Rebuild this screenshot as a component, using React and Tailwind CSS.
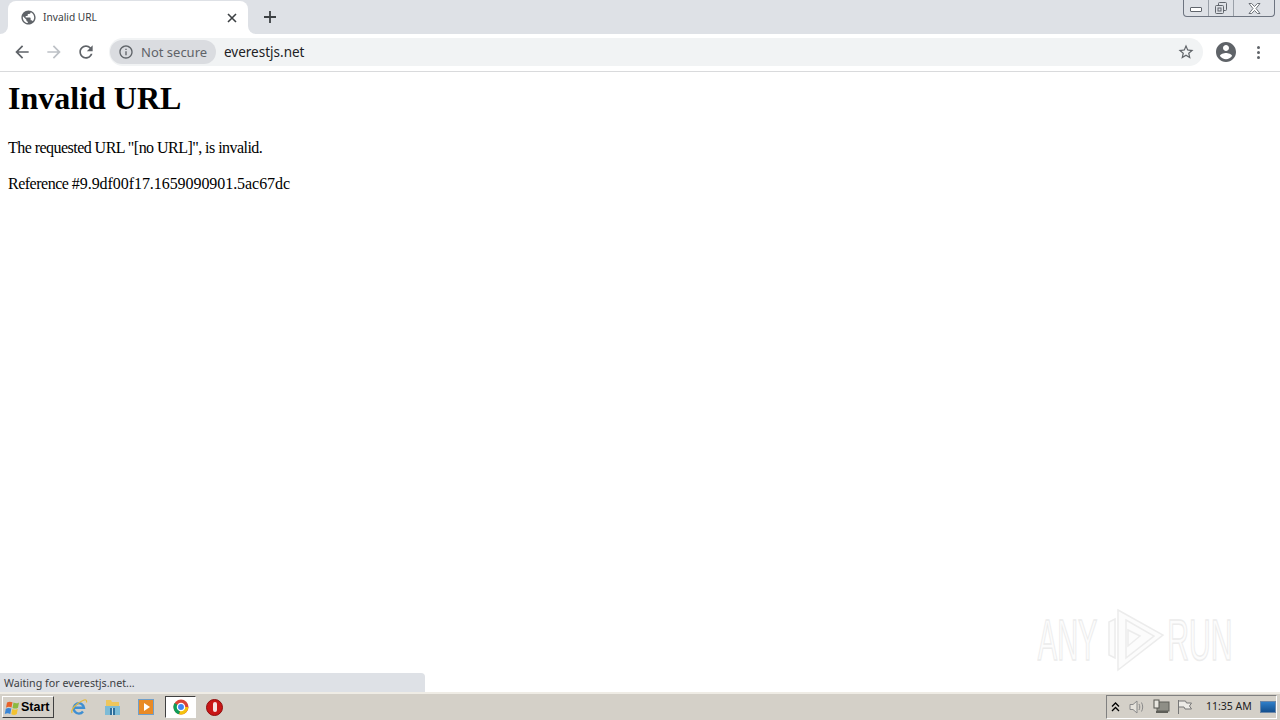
// App.jsx
const UI_FONT = "font-['Noto_Sans',sans-serif]";

const PATHS = {
  globe:
    "M12 2C6.48 2 2 6.48 2 12s4.48 10 10 10 10-4.48 10-10S17.52 2 12 2zm-1 17.93c-3.95-.49-7-3.85-7-7.93 0-.62.08-1.21.21-1.79L9 15v1c0 1.1.9 2 2 2v1.93zm6.9-2.54c-.26-.81-1-1.39-1.9-1.39h-1v-3c0-.55-.45-1-1-1H8v-2h2c.55 0 1-.45 1-1V7h2c1.1 0 2-.9 2-2v-.41c2.93 1.19 5 4.06 5 7.41 0 2.08-.8 3.97-2.1 5.39z",
  back: "M20 11H7.83l5.59-5.59L12 4l-8 8 8 8 1.41-1.41L7.83 13H20v-2z",
  forward: "M4 11h12.17l-5.59-5.59L12 4l8 8-8 8-1.41-1.41L16.17 13H4v-2z",
  reload:
    "M17.65 6.35C16.2 4.9 14.21 4 12 4c-4.42 0-7.99 3.58-7.99 8s3.57 8 7.99 8c3.73 0 6.84-2.55 7.73-6h-2.08c-.82 2.33-3.04 4-5.65 4-3.31 0-6-2.69-6-6s2.69-6 6-6c1.66 0 3.14.69 4.22 1.78L13 11h7V4l-2.35 2.35z",
  info: "M11 7h2v2h-2zm0 4h2v6h-2zm1-9C6.48 2 2 6.48 2 12s4.48 10 10 10 10-4.48 10-10S17.52 2 12 2zm0 18c-4.41 0-8-3.59-8-8s3.59-8 8-8 8 3.59 8 8-3.59 8-8 8z",
  star: "M22 9.24l-7.19-.62L12 2 9.19 8.63 2 9.24l5.46 4.73L5.82 21 12 17.27 18.18 21l-1.63-7.03L22 9.24zM12 15.4l-3.76 2.27 1-4.28-3.32-2.88 4.38-.38L12 6.1l1.71 4.04 4.38.38-3.32 2.88 1 4.28L12 15.4z",
  account:
    "M12 2C6.48 2 2 6.48 2 12s4.48 10 10 10 10-4.48 10-10S17.52 2 12 2zm0 3c1.66 0 3 1.34 3 3s-1.34 3-3 3-3-1.34-3-3 1.34-3 3-3zm0 14.2c-2.5 0-4.71-1.28-6-3.22.03-1.99 4-3.08 6-3.08 1.99 0 5.97 1.09 6 3.08-1.29 1.94-3.5 3.22-6 3.22z",
};

function Icon({ name, size = 20, className = "" }) {
  return (
    <svg width={size} height={size} viewBox="0 0 24 24" fill="currentColor" className={className}>
      <path d={PATHS[name]} />
    </svg>
  );
}

function WindowControls() {
  return (
    <div className="ml-auto mr-[5px] flex h-[17px] self-start rounded-b-[4px] border border-t-0 border-[#6d7480] bg-[#dee1e6]">
      <div className="flex w-[25px] items-center justify-center border-r border-[#9aa0a8]">
        <div className="mt-[3px] h-[5px] w-[12px] rounded-[1px] border border-[#60656c] bg-white" />
      </div>
      <div className="flex w-[25px] items-center justify-center border-r border-[#9aa0a8]">
        <svg width="14" height="13" viewBox="0 0 14 13" fill="none" stroke="#60656c">
          <rect x="4.5" y="0.5" width="8" height="8" rx="1" />
          <rect x="1.5" y="3.5" width="8" height="8" rx="1" fill="#dee1e6" />
          <rect x="4" y="6" width="3" height="3" />
        </svg>
      </div>
      <div className="flex w-[40px] items-center justify-center">
        <svg width="13" height="11" viewBox="0 0 13 11" fill="#fff" stroke="#60656c" strokeWidth="0.9">
          <path d="M1 0.5h2.6l2.9 3 2.9-3H12L8 5.5l4 5H9.4l-2.9-3-2.9 3H1l4-5z" />
        </svg>
      </div>
    </div>
  );
}

function TabStrip() {
  return (
    <div className="flex h-[34px] shrink-0 bg-[#dee1e6]">
      <div className="relative ml-2 mt-[1px] flex h-[33px] w-[240px] items-center rounded-t-[8px] bg-white pl-3 pr-[11px]">
        <div className="absolute -left-2 bottom-0 h-2 w-2 bg-white">
          <div className="h-full w-full rounded-br-[8px] bg-[#dee1e6]" />
        </div>
        <div className="absolute -right-2 bottom-0 h-2 w-2 bg-white">
          <div className="h-full w-full rounded-bl-[8px] bg-[#dee1e6]" />
        </div>
        <Icon name="globe" size={17} className="text-[#5f6368]" />
        <span className="ml-[6px] text-[10.2px] text-[#3c4043]">Invalid URL</span>
        <svg width="10" height="10" viewBox="0 0 10 10" className="ml-auto" stroke="#3c4043" strokeWidth="1.6">
          <path d="M1 1l8 8M9 1l-8 8" />
        </svg>
      </div>
      <svg width="14" height="14" viewBox="0 0 14 14" className="ml-[15px] mt-[10px]" stroke="#3c4043" strokeWidth="1.8">
        <path d="M7 1v12M1 7h12" />
      </svg>
      <WindowControls />
    </div>
  );
}

function Toolbar() {
  return (
    <div className="flex h-[38px] shrink-0 items-center border-b border-[#d9dadc] bg-white pb-[1px]">
      <Icon name="back" size={20} className="ml-3 text-[#5f6368]" />
      <Icon name="forward" size={20} className="ml-3 text-[#bdc1c6]" />
      <Icon name="reload" size={20} className="ml-3 text-[#5f6368]" />
      <div className="ml-[13px] flex h-[28px] w-[1094px] items-center rounded-full bg-[#f1f3f4] pr-[8px]">
        <div className="ml-[1px] flex h-[24px] w-[106px] items-center rounded-full bg-[#dadce0] pl-[8px] text-[#5f6368]">
          <Icon name="info" size={16} />
          <span className="ml-[7px] text-[13px] leading-none">Not secure</span>
        </div>
        <span className="ml-[8px] mt-[1px] text-[13.5px] leading-none text-[#202124]">everestjs.net</span>
        <Icon name="star" size={18} className="ml-auto text-[#5f6368]" />
      </div>
      <Icon name="account" size={24} className="ml-[11px] text-[#5f6368]" />
      <div className="ml-[19px] flex flex-col gap-[2px]">
        <span className="h-[3px] w-[3px] rounded-full bg-[#5f6368]" />
        <span className="h-[3px] w-[3px] rounded-full bg-[#5f6368]" />
        <span className="h-[3px] w-[3px] rounded-full bg-[#5f6368]" />
      </div>
    </div>
  );
}

// faint ANY.RUN mark, letters are squeezed to fit its narrow tall shape
function Watermark() {
  return (
    <div className="absolute bottom-[20px] right-[47px] flex h-[64px] items-center font-['Liberation_Sans',sans-serif] text-[58px] leading-none text-[#fcfcfc] [-webkit-text-stroke:1.5px_#ececec]">
      <div className="flex w-[64px] justify-center">
        <span className="scale-x-[0.5]">ANY</span>
      </div>
      <svg width="60" height="64" viewBox="0 0 60 64" fill="#fcfcfc" stroke="#ececec" strokeWidth="1.5" className="ml-[6px]">
        <path d="M3 14v33l6 3V11z" />
        <path d="M12 2l45 25-45 35z" />
        <path d="M20 12l28 16-28 22z" />
        <path d="M22 22l12 6-12 10z" />
      </svg>
      <div className="flex w-[67px] justify-center">
        <span className="scale-x-[0.52]">RUN</span>
      </div>
    </div>
  );
}

function Page() {
  return (
    <div className="relative min-h-0 flex-1 bg-white px-2 pt-2 font-['Liberation_Serif',serif] text-black">
      <h1 className="text-[32px] font-bold leading-[37px]">Invalid URL</h1>
      <p className="mt-[22px] text-[16px] leading-[18px] tracking-[-0.54px]">The requested URL "[no URL]", is invalid.</p>
      <p className="mt-[18px] text-[16px] leading-[18px]">
        <span className="tracking-[-0.5px]">Reference </span>
        <span className="tracking-[-0.06px]">#9.9df00f17.1659090901.5ac67dc</span>
      </p>
      <Watermark />
      <div className={`absolute bottom-0 left-0 flex h-[19px] w-[425px] items-center rounded-tr-[4px] bg-[#dee1e6] pl-1 pt-[2px] text-[10.7px] text-[#3c4043] ${UI_FONT}`}>
        Waiting for everestjs.net...
      </div>
    </div>
  );
}

function StartButton() {
  return (
    <div className="ml-[2px] flex h-[22px] w-[52px] items-center border border-t-white border-l-white border-r-[#404040] border-b-[#404040] bg-[#d4d0c8] pl-[1px] font-['Liberation_Sans',sans-serif] text-[12.5px] font-bold text-black">
      <svg width="17" height="17" viewBox="0 0 17 17">
        <path d="M3 3.5c2-1.2 3.500-1 5.500-.2L7.500 8.500c-2-.8-3.500-1-5.500.2z" fill="#e8622a" />
        <path d="M9.500 3.600c2 .8 3.500 1 5.500-.2l-1 5.300c-2 1.200-3.500 1-5.500.2z" fill="#8cb93f" />
        <path d="M1.800 9.800c2-1.200 3.500-1 5.500-.2l-1 5.300c-2-.8-3.500-1-5.500.2z" fill="#3a86d6" />
        <path d="M8.300 10c2 .8 3.500 1 5.500-.2l-1 5.300c-2 1.200-3.500 1-5.500.2z" fill="#f2c230" />
      </svg>
      <span>Start</span>
    </div>
  );
}

function QuickLaunch() {
  return (
    <div className="ml-4 flex items-center">
      <svg width="18" height="18" viewBox="0 0 18 18" fill="none">
        <path d="M3.800 9.800h10.200A5.200 5.200 0 1 0 13 13.500" stroke="#3f8fd2" strokeWidth="2.400" />
        <path d="M2 15c-1.500-3 4-10 12-13 2-.6 3 0 2.500 2.500" stroke="#e5b93c" strokeWidth="1.200" />
      </svg>
      <svg width="17" height="17" viewBox="0 0 17 17" className="ml-[16px]">
        <path d="M2 1h5l1 2h7v5H2z" fill="#eec65c" />
        <path d="M1 7h15v9H1z" fill="#7dbbd6" />
        <path d="M6 9h5v7H6z" fill="#2f6f9c" />
        <path d="M8 9h1v7H8z" fill="#cfe6ef" />
      </svg>
      <div className="ml-[17px] flex h-[16px] w-[16px] items-center justify-center border border-[#6f9fca] bg-[#e98a25]">
        <div className="ml-[1px] h-0 w-0 border-y-[4px] border-l-[6px] border-y-transparent border-l-white" />
      </div>
      <div className="ml-[11px] flex h-[22px] w-[31px] items-center justify-center border border-t-[#404040] border-l-[#404040] border-r-white border-b-white bg-white">
        <svg width="16" height="16" viewBox="0 0 16 16">
          <circle cx="8" cy="8" r="7.500" fill="#db4437" />
          <path d="M8 8h7.400A7.500 7.500 0 0 1 6 15.300z" fill="#f4c20d" />
          <path d="M8 8L6 15.300A7.500 7.500 0 0 1 1.600 4z" fill="#0f9d58" />
          <circle cx="8" cy="8" r="3.600" fill="#4285f4" stroke="#fff" strokeWidth="1.300" />
        </svg>
      </div>
      <div className="ml-[10px] flex h-[17px] w-[17px] items-center justify-center rounded-full border border-[#8e0d0d] bg-[#c91616]">
        <div className="h-[10px] w-[4px] rounded-full bg-[#f6e3e3]" />
      </div>
    </div>
  );
}

function SystemTray() {
  return (
    <div className="ml-auto flex h-[24px] w-[171px] items-center border border-t-[#808080] border-l-[#808080] border-r-white border-b-white pl-[4px]">
      <svg width="9" height="10" viewBox="0 0 9 10" fill="none" stroke="#000" strokeWidth="1.300" className="shrink-0">
        <path d="M1 4.500L4.500 1 8 4.500M1 9l3.500-3.500L8 9" />
      </svg>
      <svg width="18" height="16" viewBox="0 0 18 16" fill="none" stroke="#8a8a8a" className="ml-[8px] shrink-0">
        <path d="M2 5.500h3l4-3.500v12l-4-3.500H2z" fill="#e6e3dc" />
        <path d="M11 5c1 2 1 4 0 6M13.500 3.500c1.600 3 1.600 6 0 9" />
      </svg>
      <svg width="17" height="16" viewBox="0 0 17 16" className="ml-[7px] shrink-0">
        <rect x="4" y="3" width="12" height="9" fill="#8e8e86" stroke="#5e5e58" />
        <rect x="1" y="1" width="5" height="8" fill="#e8e6df" stroke="#55554f" />
        <path d="M3 12h12v2H3z" fill="#5e5e58" />
      </svg>
      <svg width="16" height="16" viewBox="0 0 16 16" fill="none" stroke="#777" className="ml-[7px] shrink-0">
        <path d="M1.500 1v14M1.500 2h7l1 2h5l-2 3 2 3H8l-1-2H1.500" fill="#ecebe6" />
      </svg>
      <span className={`ml-[13px] whitespace-nowrap text-[10.5px] text-[#222] ${UI_FONT}`}>11:35 AM</span>
      <div className="ml-auto h-[12px] w-[16px] shrink-0 border border-[#6b87a8] bg-gradient-to-b from-[#2f7fc9] to-[#14508f]" />
    </div>
  );
}

function Taskbar() {
  return (
    <div className="flex h-[28px] shrink-0 items-center border-t-2 border-t-[#efece5] bg-[#d4d0c8] pr-[3px]">
      <StartButton />
      <QuickLaunch />
      <SystemTray />
    </div>
  );
}

export default function App() {
  return (
    <div className={`flex h-screen w-full flex-col overflow-hidden bg-white ${UI_FONT}`}>
      <TabStrip />
      <Toolbar />
      <Page />
      <Taskbar />
    </div>
  );
}
